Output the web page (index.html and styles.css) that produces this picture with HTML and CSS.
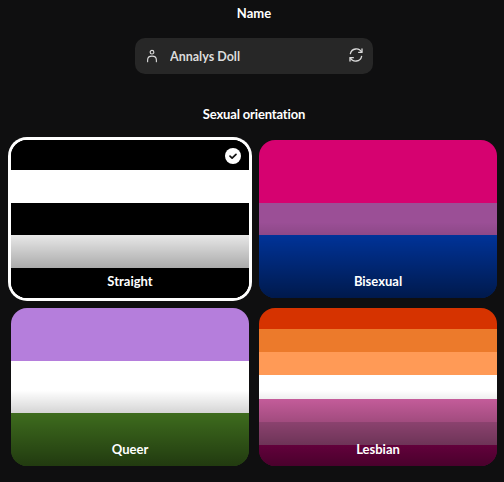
FILE: index.html

```html
<!DOCTYPE html>
<html lang="en">
<head>
  <meta charset="UTF-8" />
  <meta name="viewport" content="width=device-width, initial-scale=1.0"/>
  <title>Character setup</title>
  <link rel="stylesheet" href="styles.css">
</head>
<body>
  <div class="container">
    <label class="heading name-heading" for="name">Name</label>

    <div class="name-field">
      <svg class="user-icon" viewBox="0 0 16 16" fill="none" stroke="currentColor" stroke-width="1.3" stroke-linecap="round" stroke-linejoin="round">
        <circle cx="8" cy="3.6" r="2.1"/>
        <path d="M3 14.6v-2C3 10 5 8.2 8 8.2s5 1.8 5 4.4v2"/>
      </svg>
      <input type="text" id="name" value="Annalys Doll" />
      <svg class="refresh-icon" viewBox="0 0 24 24" fill="none" stroke="currentColor" stroke-width="2" stroke-linecap="round" stroke-linejoin="round">
        <path d="M21 3v5h-5"/>
        <path d="M20.5 8A9 9 0 0 0 3.6 10"/>
        <path d="M3 21v-5h5"/>
        <path d="M3.5 16a9 9 0 0 0 16.9-2"/>
      </svg>
    </div>

    <div class="heading orientation-heading">Sexual orientation</div>

    <div class="flags">
      <div class="flag selected">
        <div class="stripe edge-wide black"></div>
        <div class="stripe white"></div>
        <div class="stripe black"></div>
        <div class="stripe white"></div>
        <div class="stripe edge-wide black"></div>
        <svg class="check" viewBox="0 0 16 16">
          <circle cx="8" cy="8" r="8" fill="#fff"/>
          <path d="M5 8.2l2.1 2 3.9-3.9" fill="none" stroke="#111" stroke-width="1.7" stroke-linecap="round" stroke-linejoin="round"/>
        </svg>
        <span class="flag-name">Straight</span>
      </div>

      <div class="flag">
        <div class="stripe wide bi-pink"></div>
        <div class="stripe bi-purple"></div>
        <div class="stripe wide bi-blue"></div>
        <span class="flag-name">Bisexual</span>
      </div>

      <div class="flag">
        <div class="stripe queer-purple"></div>
        <div class="stripe white"></div>
        <div class="stripe queer-green"></div>
        <span class="flag-name">Queer</span>
      </div>

      <div class="flag">
        <div class="stripe edge-narrow les-1"></div>
        <div class="stripe les-2"></div>
        <div class="stripe les-3"></div>
        <div class="stripe white"></div>
        <div class="stripe les-5"></div>
        <div class="stripe les-6"></div>
        <div class="stripe edge-narrow les-7"></div>
        <span class="flag-name">Lesbian</span>
      </div>
    </div>
  </div>
</body>
</html>
```

FILE: styles.css

```css
:root {
  --background: #0f0f10;
  --field: #272727;
  --text: #ffffff;
  --muted: #dcdcdc;
}

body {
  font-family: 'Lato', 'Noto Sans', sans-serif;
  background: var(--background);
  color: var(--text);
  margin: 0;
}

.container {
  display: flex;
  flex-direction: column;
  align-items: center;
  padding: 5px 7px 16px 11px;
}

.heading {
  font-size: 13px;
  font-weight: 700;
  line-height: 16px;
}

.name-heading {
  margin-bottom: 17px;
}

.orientation-heading {
  margin: 32px 0 18px;
  letter-spacing: -0.15px;
}

.name-field {
  display: flex;
  align-items: center;
  width: 238px;
  height: 36px;
  box-sizing: border-box;
  padding: 0 9px 0 10px;
  background: var(--field);
  border-radius: 10px;
}

.user-icon {
  width: 14px;
  height: 14px;
  color: var(--muted);
  flex: none;
}

.refresh-icon {
  width: 16px;
  height: 16px;
  margin-bottom: 3px;
  color: var(--muted);
  flex: none;
}

.name-field input {
  flex: 1;
  min-width: 0;
  margin-left: 11px;
  padding: 0;
  border: none;
  outline: none;
  background: none;
  color: var(--muted);
  font-family: inherit;
  font-size: 12.5px;
  font-weight: 700;
}

.flags {
  display: grid;
  grid-template-columns: 238px 238px;
  grid-auto-rows: 158px;
  gap: 10px;
}

.flag {
  position: relative;
  display: flex;
  flex-direction: column;
  border-radius: 16px;
  overflow: hidden;
}

.flag.selected {
  box-shadow: 0 0 0 3px #fff;
  background: #000;
}

.flag::after {
  content: "";
  position: absolute;
  inset: 0;
  background: linear-gradient(to bottom, rgba(0, 0, 0, 0) 52%, rgba(0, 0, 0, 0.55) 100%);
}

.stripe {
  flex: 1;
}

.stripe.wide {
  flex: 2;
}

.stripe.edge-wide {
  flex: 0.9;
}

.stripe.edge-narrow {
  flex: 0.93;
}

.black { background: #000; }
.white { background: #fff; }
.bi-pink { background: #d60270; }
.bi-purple { background: #9b4f96; }
.bi-blue { background: #0038a8; }
.queer-purple { background: #b57edc; }
.queer-green { background: #4a8123; }
.les-1 { background: #d63300; }
.les-2 { background: #ec7a2b; }
.les-3 { background: #ff9a56; }
.les-5 { background: #d162a4; }
.les-6 { background: #b55690; }
.les-7 { background: #a30262; }

.flag-name {
  position: absolute;
  left: 0;
  right: 0;
  bottom: 9px;
  z-index: 1;
  text-align: center;
  font-size: 13px;
  font-weight: 700;
  line-height: 16px;
}

.check {
  position: absolute;
  top: 8px;
  right: 8px;
  width: 16px;
  height: 16px;
  z-index: 1;
}
```
